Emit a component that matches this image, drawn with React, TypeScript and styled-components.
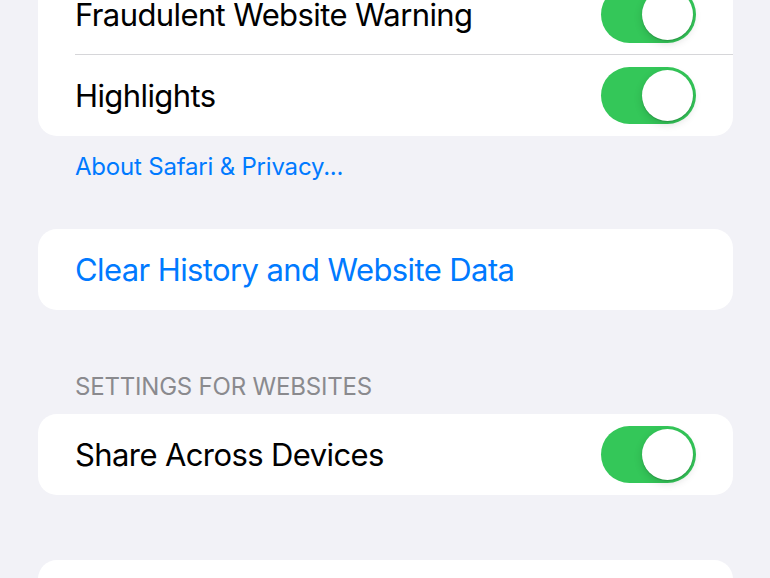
import { useState } from "react";
import styled, { createGlobalStyle } from "styled-components";

const GlobalStyle = createGlobalStyle`
  html, body {
    margin: 0;
    padding: 0;
    background: #f2f2f7;
    overflow: hidden;
  }
  body {
    font-family: Inter, "Noto Sans", sans-serif;
    -webkit-font-smoothing: antialiased;
  }
`;

const Page = styled.div`
  width: 770px;
  height: 578px;
  padding: 0 37px 0 38px;
  box-sizing: border-box;
  display: flex;
  flex-direction: column;
  overflow: hidden;
`;

const Card = styled.div<{ $offset?: number }>`
  background: #ffffff;
  border-radius: 19px;
  margin-top: ${(p) => p.$offset ?? 0}px;
  overflow: hidden;
  flex-shrink: 0;
`;

const Row = styled.div<{ $divider?: boolean }>`
  height: 81px;
  display: flex;
  align-items: center;
  justify-content: space-between;
  padding: 0 37px 0 37px;
  position: relative;
  box-sizing: border-box;

  ${(p) =>
    p.$divider &&
    `
    &::after {
      content: "";
      position: absolute;
      left: 37px;
      right: 0;
      bottom: 0;
      height: 1px;
      background: #d6d6d9;
    }
  `}
`;

const Label = styled.span<{ $blue?: boolean }>`
  font-size: 31px;
  letter-spacing: -0.6px;
  color: ${(p) => (p.$blue ? "#007aff" : "#000000")};
`;

const Footer = styled.div`
  margin-top: 16px;
  padding-left: 37px;
  font-size: 24px;
  line-height: 30px;
  color: #007aff;
  letter-spacing: -0.2px;
`;

const Header = styled.div<{ $offset: number }>`
  margin-top: ${(p) => p.$offset}px;
  margin-bottom: 12px;
  padding-left: 37px;
  font-size: 24px;
  line-height: 30px;
  color: #8a8a8e;
  letter-spacing: -0.2px;
  text-transform: uppercase;
`;

const Track = styled.button<{ $on: boolean }>`
  width: 95px;
  height: 57px;
  border-radius: 29px;
  border: none;
  padding: 0;
  background: ${(p) => (p.$on ? "#34c759" : "#e9e9eb")};
  position: relative;
  cursor: pointer;
  flex-shrink: 0;
`;

const Knob = styled.span<{ $on: boolean }>`
  position: absolute;
  top: 3px;
  left: ${(p) => (p.$on ? "41px" : "3px")};
  width: 51px;
  height: 51px;
  border-radius: 50%;
  background: #ffffff;
  box-shadow: 0 3px 8px rgba(0, 0, 0, 0.15), 0 1px 1px rgba(0, 0, 0, 0.16);
  transition: left 0.2s ease;
`;

const Toggle = ({ initial = true }: { initial?: boolean }) => {
  const [on, setOn] = useState(initial);
  return (
    <Track $on={on} onClick={() => setOn(!on)}>
      <Knob $on={on} />
    </Track>
  );
};

const App = () => {
  return (
    <Page>
      <GlobalStyle />
      <Card $offset={-26}>
        <Row $divider>
          <Label>Fraudulent Website Warning</Label>
          <Toggle />
        </Row>
        <Row>
          <Label>Highlights</Label>
          <Toggle />
        </Row>
      </Card>
      <Footer>About Safari &amp; Privacy...</Footer>

      <Card $offset={47}>
        <Row>
          <Label $blue>Clear History and Website Data</Label>
        </Row>
      </Card>

      <Header $offset={62}>Settings for Websites</Header>
      <Card>
        <Row>
          <Label>Share Across Devices</Label>
          <Toggle />
        </Row>
      </Card>

      <Card $offset={65}>
        <Row />
      </Card>
    </Page>
  );
};

export default App;
